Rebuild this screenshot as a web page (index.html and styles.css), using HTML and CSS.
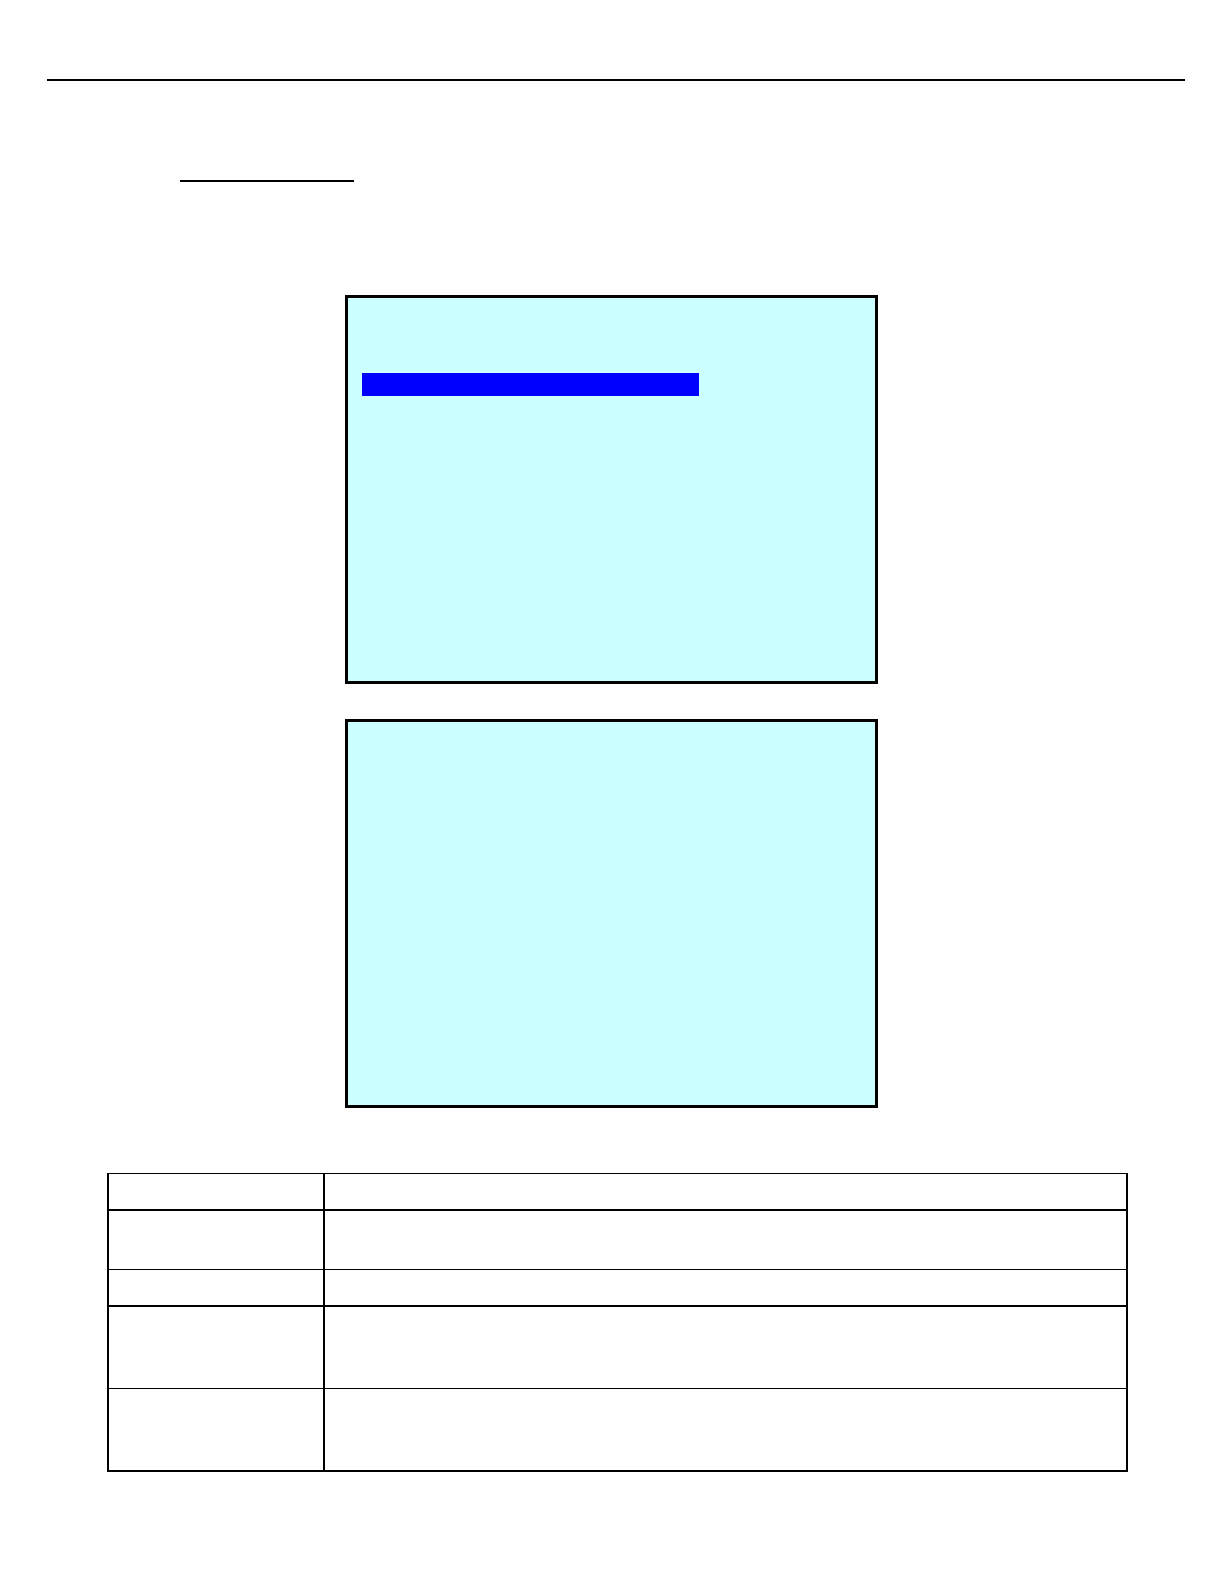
FILE: index.html
```html
<!DOCTYPE html>
<html lang="en">
<head>
<meta charset="utf-8">
<meta name="viewport" content="width=device-width, initial-scale=1">
<title>Document page</title>
<link rel="stylesheet" href="styles.css">
</head>
<body>
<header class="page-header"></header>
<main>
  <div class="section-heading"></div>
  <div class="screens">
    <section class="screen"><div class="highlight"></div></section>
    <section class="screen"></section>
  </div>
  <div class="table-wrap">
    <table class="options">
      <tbody>
        <tr class="short rule-thick"><td></td><td></td></tr>
        <tr class="medium"><td></td><td></td></tr>
        <tr class="short rule-thick"><td></td><td></td></tr>
        <tr class="tall"><td></td><td></td></tr>
        <tr class="tall rule-thick"><td></td><td></td></tr>
      </tbody>
    </table>
  </div>
</main>
</body>
</html>
```

FILE: styles.css
```css
* {
  box-sizing: border-box;
}

body {
  margin: 0;
  background: #fff;
  font-family: "Liberation Sans", Arial, sans-serif;
}

.page-header {
  margin: 0 39px 0 47px;
  padding-top: 79px;
  border-bottom: 2px solid #000;
}

main {
  display: flex;
  flex-direction: column;
  padding-bottom: 112px;
}

.section-heading {
  width: 174px;
  margin: 0 0 113px 180px;
  padding-top: 99px;
  border-bottom: 2px solid #000;
}

.screens {
  display: flex;
  flex-direction: column;
  gap: 35px;
  padding: 0 346px 0 345px;
}

.screen {
  min-height: 389px;
  padding: 75px 14px;
  border: 3px solid #000;
  background: #cff;
}

.highlight {
  width: 337px;
  max-width: 100%;
  height: 23px;
  background: #00f;
}

.table-wrap {
  padding: 65px 96px 0 107px;
}

.options {
  width: 100%;
  table-layout: fixed;
  border-collapse: separate;
  border-spacing: 0;
  border: solid #000;
  border-width: 1px 2px 0;
}

.options td {
  padding: 0;
  border-bottom: 1px solid #000;
}

.options td:first-child {
  width: 216px;
  border-right: 2px solid #000;
}

.options .rule-thick td {
  border-bottom-width: 2px;
}

.short td {
  height: 37px;
}

.medium td {
  height: 59px;
}

.tall td {
  height: 82px;
}

.tall.rule-thick td {
  height: 83px;
}
```
